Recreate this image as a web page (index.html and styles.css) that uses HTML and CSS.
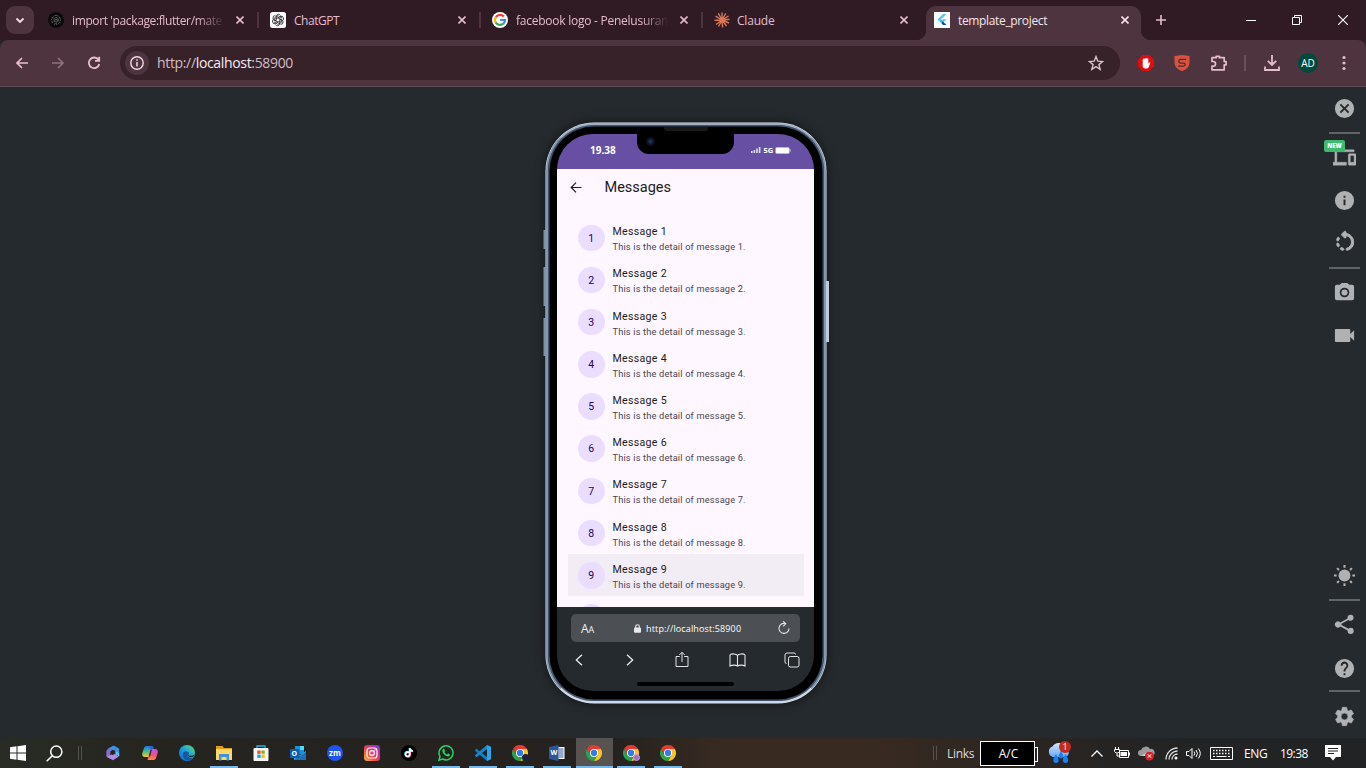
FILE: index.html
```html
<!DOCTYPE html>
<html lang="id">
<head>
<meta charset="utf-8">
<title>template_project</title>
<link rel="stylesheet" href="styles.css">
</head>
<body>
<svg class="defs" width="0" height="0">
  <defs>
    <symbol id="x" viewBox="0 0 8 8"><path d="M.5.5l7 7M7.500.5l-7 7" stroke="currentColor" stroke-width="1.6" fill="none"/></symbol>
    <symbol id="chrome" viewBox="0 0 24 24">
      <path fill="#e33b2e" d="M22.400 6A12 12 0 0 0 1.600 6L6.800 15 12 12V6z"/>
      <path fill="#fcc31e" d="M22.400 6A12 12 0 0 1 12 24l5.200-9L12 12V6z"/>
      <path fill="#2da14c" d="M12 24A12 12 0 0 1 1.600 6l5.200 9L12 12l5.200 3z"/>
      <circle cx="12" cy="12" r="6" fill="#fff"/><circle cx="12" cy="12" r="4.700" fill="#2f7de9"/>
    </symbol>
    <linearGradient id="g-edge" x1="0" y1="1" x2="1" y2="0"><stop offset="0" stop-color="#1265c0"/><stop offset=".5" stop-color="#1e9ee0"/><stop offset="1" stop-color="#5ee06a"/></linearGradient>
    <linearGradient id="g-insta" x1="0" y1="1" x2="1" y2="0"><stop offset="0" stop-color="#fdc04f"/><stop offset=".35" stop-color="#f5523d"/><stop offset=".65" stop-color="#d32c92"/><stop offset="1" stop-color="#7638d8"/></linearGradient>
    <linearGradient id="g-cop1" x1="0" y1="0" x2="0" y2="1"><stop offset="0" stop-color="#1a75e8"/><stop offset=".5" stop-color="#3fbf8a"/><stop offset="1" stop-color="#f5cf22"/></linearGradient>
    <linearGradient id="g-cop2" x1="0" y1="0" x2="0" y2="1"><stop offset="0" stop-color="#b65be8"/><stop offset=".5" stop-color="#ec4f88"/><stop offset="1" stop-color="#fb8b3c"/></linearGradient>
    <linearGradient id="g-cloud" x1="0" y1="0" x2="0" y2="1"><stop offset="0" stop-color="#d4e6fc"/><stop offset="1" stop-color="#6aa6f2"/></linearGradient>
  </defs>
</svg>

<div class="desktop">
  <header class="tabstrip">
    <button class="tab-search"><svg width="10" height="7" viewBox="0 0 10 7"><path d="M1.500 1.500L5 5l3.500-3.500" fill="none" stroke="#f5dfe6" stroke-width="1.800"/></svg></button>
    <div class="tab">
      <svg class="fav" viewBox="0 0 16 16"><circle cx="8" cy="8" r="8" fill="#0b0a0b"/><g fill="none" stroke="#777" stroke-width=".9" stroke-dasharray="1 1"><circle cx="8" cy="8" r="4.500"/><circle cx="8" cy="8" r="2.300"/><path d="M8 3v10M4 5.500l8 5M12 5.500l-8 5"/></g></svg>
      <span class="tab-title t1 fade">import 'package:flutter/mate</span><svg class="tab-x"><use href="#x"/></svg>
    </div>
    <div class="tab">
      <svg class="fav" viewBox="0 0 16 16"><rect width="16" height="16" rx="2.500" fill="#fff"/><g fill="none" stroke="#333" stroke-width=".9"><g id="petal"><path d="M6 7V4.800C6 2 9.500 1.500 10.500 3.500M6 7l3.800-2.200 2.300 1.300"/></g><use href="#petal" transform="rotate(60 8 8)"/><use href="#petal" transform="rotate(120 8 8)"/><use href="#petal" transform="rotate(180 8 8)"/><use href="#petal" transform="rotate(240 8 8)"/><use href="#petal" transform="rotate(300 8 8)"/></g></svg>
      <span class="tab-title t2">ChatGPT</span><svg class="tab-x"><use href="#x"/></svg>
    </div>
    <div class="tab">
      <svg class="fav" viewBox="0 0 16 16"><circle cx="8" cy="8" r="8" fill="#fff"/><g fill="none" stroke-width="2.200"><path d="M11.800 4.500A5 5 0 0 0 3.800 5.300" stroke="#ea4335"/><path d="M3.800 5.200a5 5 0 0 0 0 5.500" stroke="#fbbc04"/><path d="M3.700 10.500a5 5 0 0 0 7.800 1" stroke="#34a853"/><path d="M11.400 11.600A4.700 4.700 0 0 0 13 8H8.200" stroke="#4285f4"/></g></svg>
      <span class="tab-title t3 fade">facebook logo - Penelusuran</span><svg class="tab-x"><use href="#x"/></svg>
    </div>
    <div class="tab last">
      <svg class="fav" viewBox="0 0 16 16"><path d="M8 8V.6M8 8l3.800-6.600M8 8l6.500-4M8 8l7.500-.7M8 8l7 3M8 8l4.500 6M8 8l.6 7.500M8 8l-3.500 6.500M8 8l-6 4.500M8 8L.5 8.300M8 8L1.500 4.200M8 8L4.300 1.300" stroke="#d97757" stroke-width="1.400"/></svg>
      <span class="tab-title t4">Claude</span><svg class="tab-x"><use href="#x"/></svg>
    </div>
    <div class="tab active">
      <svg class="fav" viewBox="0 0 16 16"><path fill="#fff" d="M0 0h16v16H0z"/><path fill="#54c5f8" d="M9 2h3.500L5.200 9.200 3.500 7.500zM9 7.300h3.500L8.800 11 7.100 9.200z"/><path fill="#01579b" d="M7.100 11l1.700-1.700L12.500 13H9z"/><path fill="#29b6f6" d="M5.400 9.300l1.700-1.700 1.700 1.700L7.100 11z"/></svg>
      <span class="tab-title t5">template_project</span><svg class="tab-x"><use href="#x"/></svg>
    </div>
    <button class="new-tab"><svg width="12" height="12" viewBox="0 0 12 12"><path d="M6 1v10M1 6h10" stroke="#e5bccb" stroke-width="1.600"/></svg></button>
    <div class="window-buttons">
      <span><svg width="10" height="10"><path d="M0 5.500h10" stroke="#fff"/></svg></span>
      <span><svg width="10" height="10"><path d="M.5 2.500h7v7h-7zM2.500 2V.5h7v7H8" fill="none" stroke="#fff"/></svg></span>
      <span><svg width="10" height="10"><path d="M0 0l10 10M10 0L0 10" stroke="#fff" stroke-width="1.100"/></svg></span>
    </div>
  </header>

  <nav class="toolbar">
    <div class="nav-buttons">
      <svg width="14" height="12" viewBox="0 0 14 12"><path d="M13 6H2M7 1L2 6l5 5" fill="none" stroke="#ebbfd0" stroke-width="1.700"/></svg>
      <svg width="14" height="12" viewBox="0 0 14 12"><path d="M1 6h11M7 1l5 5-5 5" fill="none" stroke="#8e717d" stroke-width="1.700"/></svg>
      <svg width="14" height="14" viewBox="0 0 14 14"><path d="M11.500 3.800A5.300 5.300 0 1 0 12.300 8M12.200.8v4H8" fill="none" stroke="#ebbfd0" stroke-width="1.800"/></svg>
    </div>
    <div class="omnibox">
      <span class="site-info"><svg width="14" height="14" viewBox="0 0 14 14"><circle cx="7" cy="7" r="6.200" fill="none" stroke="#f0dbe2" stroke-width="1.400"/><path d="M7 6v4.500M7 3.300v1.500" stroke="#f0dbe2" stroke-width="1.500"/></svg></span>
      <span class="url"><span>http://</span><b>localhost</b><span>:58900</span></span>
      <svg class="star" width="16" height="16" viewBox="0 0 16 16"><path d="M8 1.600l1.800 4.600 4.900.3-3.800 3.100 1.300 4.800L8 11.700l-4.200 2.700 1.300-4.800L1.300 6.500l4.900-.3z" fill="none" stroke="#d8c4cc" stroke-width="1.400"/></svg>
    </div>
    <div class="extensions">
      <svg width="16" height="16" viewBox="0 0 16 16"><path fill="#e40c0c" d="M4.700 0h6.600L16 4.700v6.600L11.300 16H4.700L0 11.300V4.700z"/><path fill="#fff" d="M5 4.200c0-.8 1.100-.8 1.200 0 0-1.200 1.400-1.200 1.400-.4.100-1.200 1.400-1.100 1.400 0 .2-.8 1.300-.7 1.300.2v4.500l.9-1.100c.6-.5 1.300 0 1 .7L10.800 12c-.4.900-1.200 1.500-2.300 1.500H7.200c-1.400 0-2.500-1-2.500-2.500V5c0-.4.100-.7.300-.8z"/></svg>
      <svg width="16" height="16" viewBox="0 0 16 16"><path fill="#d9523f" d="M.5 1L8 0l7.500 1v6c0 5-3 7.500-7.500 9C3.500 14.500.5 12 .5 7z"/><path d="M12 4.400H6.300a1.900 1.900 0 0 0 0 3.700h3.300a1.500 1.500 0 0 1 0 3H4" stroke="#4e2c34" stroke-width="1.300" fill="none"/></svg>
      <svg width="18" height="18" viewBox="0 0 18 18"><path d="M2 3.700h4.200V2.300h3.200v1.400h4.800v3.900h1.900v3.200h-1.900v5H2v-3.600h1.200a2.200 2.200 0 0 0 0-4.700H2z" fill="none" stroke="#e5bccb" stroke-width="1.700" stroke-linejoin="round"/></svg>
    </div>
    <i class="bar-divider"></i>
    <svg class="download" width="16" height="16" viewBox="0 0 16 16"><path d="M8 0v9.500M3.800 5.800L8 10l4.200-4.200M1 11.500V15h14v-3.500" fill="none" stroke="#e5bccb" stroke-width="1.800"/></svg>
    <span class="avatar">AD</span>
    <svg class="kebab" width="4" height="16" viewBox="0 0 4 16"><g fill="#e5bccb"><circle cx="2" cy="2.500" r="1.600"/><circle cx="2" cy="8" r="1.600"/><circle cx="2" cy="13.500" r="1.600"/></g></svg>
  </nav>

  <main class="stage">
    <div class="phone">
      <i class="key mute"></i><i class="key vol-up"></i><i class="key vol-down"></i><i class="key power"></i>
      <i class="speaker"></i>
      <div class="screen">
        <div class="status">
          <span class="clock">19.38</span>
          <span class="signal"><svg width="10" height="6" viewBox="0 0 10 6"><path fill="#e3dcf1" d="M0 4h1.600v2H0zM2.600 3h1.600v3H2.600zM5.200 1.500h1.600V6H5.200zM7.800 0h1.600v6H7.800z"/></svg>5G<svg width="16" height="7" viewBox="0 0 16 7"><rect x=".5" y=".3" width="14" height="6.400" rx="1.700" fill="#fff" stroke="#a99bcc" stroke-width=".7"/><path d="M15.500 2.500v2" stroke="#b9addb"/></svg></span>
          <i class="notch"><i class="camera"></i></i>
        </div>
        <div class="app">
          <div class="appbar"><svg width="12" height="11" viewBox="0 0 12 11"><path d="M11.500 5.500h-10M6 .7L1.200 5.500 6 10.300" fill="none" stroke="#1d1b20" stroke-width="1.200"/></svg><span>Messages</span></div>
          <div class="list">
            <div class="row"><i class="num">1</i><div><p>Message 1</p><small>This is the detail of message 1.</small></div></div>
            <div class="row"><i class="num">2</i><div><p>Message 2</p><small>This is the detail of message 2.</small></div></div>
            <div class="row"><i class="num">3</i><div><p>Message 3</p><small>This is the detail of message 3.</small></div></div>
            <div class="row"><i class="num">4</i><div><p>Message 4</p><small>This is the detail of message 4.</small></div></div>
            <div class="row"><i class="num">5</i><div><p>Message 5</p><small>This is the detail of message 5.</small></div></div>
            <div class="row"><i class="num">6</i><div><p>Message 6</p><small>This is the detail of message 6.</small></div></div>
            <div class="row"><i class="num">7</i><div><p>Message 7</p><small>This is the detail of message 7.</small></div></div>
            <div class="row"><i class="num">8</i><div><p>Message 8</p><small>This is the detail of message 8.</small></div></div>
            <div class="row hover"><i class="num">9</i><div><p>Message 9</p><small>This is the detail of message 9.</small></div></div>
            <div class="row"><i class="num"></i></div>
          </div>
        </div>
        <div class="safari">
          <div class="address">
            <span class="aa">A<small>A</small></span>
            <span class="addr"><svg width="7" height="9" viewBox="0 0 7 9"><rect y="3.600" width="7" height="5.200" rx="1" fill="#e8e8e8"/><path d="M1.700 4V2.500a1.800 1.800 0 0 1 3.600 0V4" fill="none" stroke="#e8e8e8" stroke-width="1.100"/></svg><span class="addr-text">http://localhost:58900</span></span>
            <svg width="12" height="14" viewBox="0 0 12 14"><path d="M7 2.500A5 5 0 1 0 11 7.500M5 .3l2.700 2.300L5.300 5.300" fill="none" stroke="#e4e4e4" stroke-width="1.100"/></svg>
          </div>
          <div class="actions">
            <svg width="8" height="12" viewBox="0 0 8 12"><path d="M7 .8L1.300 6 7 11.200" fill="none" stroke="#f1f1f1" stroke-width="1.200"/></svg>
            <svg class="a2" width="8" height="12" viewBox="0 0 8 12"><path d="M1 .8L6.700 6 1 11.200" fill="none" stroke="#f1f1f1" stroke-width="1.200"/></svg>
            <svg class="a3" width="14" height="17" viewBox="0 0 14 17"><path d="M4.800 5.500H1v10h12v-10H9.200M7 11V1.300M4.300 4L7 1.300 9.700 4" fill="none" stroke="#e4e4e4" stroke-linejoin="round"/></svg>
            <svg class="a4" width="17" height="14" viewBox="0 0 17 14"><path d="M8.500 2.500C7.500.7 2.500.3 1 2v11c2-1.200 6-1.200 7.500 0 1.500-1.200 5.500-1.200 7.500 0V2C14.500.3 9.500.7 8.500 2.500zV13" fill="none" stroke="#e4e4e4" stroke-width="1.100"/></svg>
            <svg class="a5" width="16" height="16" viewBox="0 0 16 16"><rect x="4.500" y="4.500" width="10.500" height="10.500" rx="1.800" fill="none" stroke="#e4e4e4"/><path d="M2.500 11.500A1.500 1.500 0 0 1 1 10V3a2 2 0 0 1 2-2h7a1.500 1.500 0 0 1 1.500 1.500" fill="none" stroke="#e4e4e4"/></svg>
          </div>
          <i class="home"></i>
        </div>
      </div>
    </div>

    <aside class="rail">
      <span class="h44"><svg viewBox="0 0 24 24"><path d="M12 2a10 10 0 1 0 0 20 10 10 0 0 0 0-20zm5 13.600L15.600 17 12 13.400 8.400 17 7 15.600l3.600-3.600L7 8.400 8.400 7l3.600 3.600L15.600 7 17 8.400 13.400 12z"/></svg></span>
      <hr>
      <span class="h45 devices"><svg viewBox="0 0 24 24"><path d="M4 6h18V4H4c-1.100 0-2 .9-2 2v11H0v3h14v-3H4zm19 2h-6c-.5 0-1 .5-1 1v10c0 .6.500 1 1 1h6c.5 0 1-.4 1-1V9c0-.5-.5-1-1-1zm-1 9h-4v-7h4z" stroke="#afb1b2" stroke-width=".5"/></svg><b class="new">NEW</b></span>
      <span class="h42"><svg viewBox="0 0 24 24"><path d="M12 2a10 10 0 1 0 0 20 10 10 0 0 0 0-20zm1 15h-2v-6h2zm0-8h-2V7h2z"/></svg></span>
      <span class="h42 rotate"><svg viewBox="0 0 24 24"><path d="M6.560 7.980C6.100 7.520 5.310 7.600 5 8.170c-.28.510-.5 1.030-.67 1.580-.19.630.310 1.250.960 1.250h.010c.43 0 .82-.28.940-.7.120-.4.280-.79.480-1.170.22-.37.150-.84-.16-1.150zM5.310 13h-.02c-.65 0-1.150.62-.96 1.250.16.540.380 1.070.660 1.580.31.570 1.110.660 1.570.2.300-.31.380-.77.170-1.150-.2-.37-.36-.76-.48-1.160-.12-.44-.51-.72-.94-.72zm2.850 6.020c.52.280 1.050.510 1.590.660.620.180 1.240-.32 1.240-.96v-.03c0-.43-.28-.82-.7-.94-.4-.12-.78-.28-1.150-.48-.38-.21-.86-.14-1.160.170l-.03.030c-.45.450-.36 1.240.210 1.550zM13 4.070V3.050c0-.89-1.080-1.340-1.710-.71L9.170 4.460c-.39.390-.39 1.020 0 1.410l2.120 2.120c.63.630 1.710.190 1.710-.7V6.090c2.840.48 5 2.940 5 5.910 0 2.730-1.820 5.020-4.320 5.750-.41.120-.68.510-.68.940v.02c0 .65.610 1.140 1.230.96A7.976 7.976 0 0 0 20 12c0-4.080-3.050-7.440-7-7.930z" stroke="#afb1b2" stroke-width=".9"/></svg></span>
      <hr class="second">
      <span class="h46"><svg viewBox="0 0 24 24"><circle cx="12" cy="12" r="3.200"/><path d="M9 2L7.170 4H4a2 2 0 0 0-2 2v12a2 2 0 0 0 2 2h16a2 2 0 0 0 2-2V6a2 2 0 0 0-2-2h-3.170L15 2zm3 15a5 5 0 1 1 0-10 5 5 0 0 1 0 10z"/></svg></span>
      <span class="h40"><svg viewBox="0 0 24 24"><path d="M18 10.500V6.300a1 1 0 0 0-1-1H3a1 1 0 0 0-1 1v11.400a1 1 0 0 0 1 1h14a1 1 0 0 0 1-1v-4.200l4 4v-11z"/></svg></span>
      <span class="h46 sun"><svg viewBox="0 0 24 24"><circle cx="12" cy="12" r="6.200"/><path d="M12 1v2.800M12 20.200V23M1 12h2.800M20.200 12H23M4.300 4.300l1.900 1.900M17.800 17.800l1.900 1.900M4.300 19.700l1.900-1.900M17.800 6.200l1.900-1.900" stroke="#afb1b2" stroke-width="2.200"/></svg></span>
      <hr class="flush">
      <span class="h46"><svg viewBox="0 0 24 24"><path d="M18.500 15.500c-.9 0-1.700.4-2.300 1L8.900 12.600v-1.300l7.200-4a3.200 3.200 0 1 0-1-2.300v.8L7.600 9.900a3.200 3.200 0 1 0 0 4.300l7.600 4v.7a3.200 3.200 0 1 0 3.300-3.400z"/></svg></span>
      <span class="h42"><svg viewBox="0 0 24 24"><path d="M12 2a10 10 0 1 0 0 20 10 10 0 0 0 0-20zm1 17h-2v-2h2zm2.070-7.750l-.9.920C13.450 12.900 13 13.500 13 15h-2v-.5c0-1.100.45-2.100 1.170-2.830l1.240-1.260A2 2 0 1 0 10 9H8a4 4 0 1 1 7.070 2.250z"/></svg></span>
      <hr>
      <span class="h46 gear"><svg viewBox="0 0 24 24"><path d="M19.140 12.940c.04-.3.060-.61.060-.94s-.02-.64-.07-.94l2.030-1.580a.49.49 0 0 0 .12-.61l-1.920-3.320a.49.49 0 0 0-.59-.22l-2.390.960a7 7 0 0 0-1.620-.94l-.36-2.540a.48.48 0 0 0-.48-.41h-3.840a.47.47 0 0 0-.47.410l-.36 2.540c-.59.240-1.130.570-1.620.940l-2.390-.96a.48.48 0 0 0-.59.220L2.740 8.870a.47.47 0 0 0 .12.610l2.030 1.580a6 6 0 0 0 0 1.880l-2.030 1.580a.49.49 0 0 0-.12.610l1.920 3.320c.12.220.370.290.590.220l2.390-.96c.5.380 1.030.700 1.620.940l.36 2.540c.05.240.240.410.480.410h3.840c.24 0 .44-.17.470-.41l.36-2.540c.59-.24 1.130-.56 1.620-.94l2.390.960c.22.080.470 0 .59-.22l1.920-3.320a.47.47 0 0 0-.12-.61zM12 15.600a3.600 3.600 0 1 1 0-7.200 3.600 3.600 0 0 1 0 7.200z" stroke="#afb1b2" stroke-width=".7"/></svg></span>
    </aside>
  </main>

  <footer class="taskbar">
    <span class="start"><svg width="16" height="16" viewBox="0 0 16 16"><path fill="#fff" d="M0 2.200l6.500-.9v6.200H0zM7.500 1.200L16 0v7.500H7.500zM0 8.500h6.500v6.200L0 13.800zM7.500 8.500H16V16l-8.500-1.200z"/></svg></span>
    <span class="search"><svg width="17" height="17" viewBox="0 0 17 17"><circle cx="10.300" cy="6.700" r="5.600" fill="none" stroke="#fff" stroke-width="1.500"/><path d="M6.300 10.700L.7 16.300" stroke="#fff" stroke-width="1.600"/></svg></span>
    <i class="grip"></i>
    <div class="apps">
      <span><svg viewBox="0 0 16 16"><path fill="#8d6cc4" d="M8.500.8L3.500 3.300 1.300 6v5.500l3.400 2L5.500 6l4-2z"/><path fill="#3f8fe0" d="M7.500 1l2-.2 4.700 3v7l-3.700-2.300V6L7 4.200 5.300 6 3 4.500z"/><path fill="#5bc4ee" d="M10.500 6l3.700 2.200v3.300l-3.700-2.300z"/><path fill="#b68aea" d="M2 12l6-3.400 2.500.6 3.300 2.300L8 15.200z"/><path fill="#24231f" d="M6.200 6.300l3.300.2.300 2.600-3 1.200z"/></svg></span>
      <span><svg viewBox="0 0 16 16"><path fill="url(#g-cop1)" d="M5 1h5.500L7.500 12H3C0 12-.2 9.500.6 7L2 3C2.500 1.500 3.500 1 5 1z"/><path fill="url(#g-cop2)" d="M11 15H5.500L8.500 4H13c3 0 3.200 2.500 2.400 5L14 13c-.5 1.500-1.500 2-3 2z"/><path fill="#315fd6" d="M8 1h2c1.300 0 1.500 1.500 2 3H8z"/><path d="M9.300 4.500l-2 7" stroke="#3a2030" stroke-width="1.200"/></svg></span>
      <span><svg viewBox="0 0 16 16"><circle cx="8" cy="8" r="8" fill="url(#g-edge)"/><path fill="#1456ac" d="M4 8c1-2 3.500-2.500 5-1-1.500 1-1.500 5.500 3 6 1 0 2-.4 2.800-.8C12.500 16 5.500 17.500 4 11z"/><path fill="#262420" d="M9 7c1.500 1-.3 2 .3 2.900 1 1.400 4.500 1.100 6.200-.7l-.7 2.300C11 13 7 11 9 7z"/></svg></span>
      <span class="running"><svg viewBox="0 0 16 16"><path fill="#dc9c18" d="M0 1h6.500L8 3h8v4H0z"/><path fill="#ffd768" d="M0 4h16v11H0z"/><path fill="#3c93dc" d="M3 9h10v6.500h-2.500V12h-5v3.500H3z"/></svg></span>
      <span><svg viewBox="0 0 16 16"><path d="M4 4V1h8v3" fill="none" stroke="#20b2e5" stroke-width="1.300"/><rect x=".5" y="3" width="15" height="13" rx="1" fill="#f5f5f5"/><path fill="#f25022" d="M4.300 5.500h3.300v3.300H4.300z"/><path fill="#7fba00" d="M8.400 5.500h3.300v3.300H8.400z"/><path fill="#00a4ef" d="M4.300 9.600h3.300v3.300H4.300z"/><path fill="#ffb900" d="M8.400 9.600h3.300v3.300H8.400z"/></svg></span>
      <span class="outlook"><svg viewBox="0 0 16 16"><path fill="#1490df" d="M5 1h9v8H5z"/><path fill="#28a8ea" d="M4 6l6 4 6-4v9H4z"/><path fill="#50d9ff" d="M10 1h4v4h-4z"/><path fill="#1b70bd" d="M4 15l12-8v8z"/><rect y="4" width="9.500" height="9" rx=".8" fill="#0a5fb2"/></svg><em>O</em></span>
      <span class="zoom"><em>zm</em></span>
      <span><svg viewBox="0 0 16 16"><rect width="16" height="16" rx="3.500" fill="url(#g-insta)"/><rect x="3" y="3" width="10" height="10" rx="2.800" fill="none" stroke="#fff" stroke-width="1.200"/><circle cx="8" cy="8" r="2.400" fill="none" stroke="#fff" stroke-width="1.200"/><circle cx="11" cy="5" r=".7" fill="#fff"/></svg></span>
      <span><svg viewBox="0 0 16 16"><circle cx="8" cy="8" r="8" fill="#000"/><g fill="none" stroke-width="1.600"><path stroke="#25f4ee" d="M7.400 7a2.200 2.200 0 1 0 1 2V3c.3 1.500 1.300 2.500 3 2.500"/><path stroke="#fe2c55" d="M8.400 8a2.200 2.200 0 1 0 1 2V4c.3 1.500 1.300 2.500 3 2.500"/><path stroke="#fff" d="M7.900 7.500a2.200 2.200 0 1 0 1 2v-6c.3 1.500 1.300 2.500 3 2.500"/></g></svg></span>
      <span class="running"><svg viewBox="0 0 16 16"><path d="M.9 15.200l1.100-3.800a7 7 0 1 1 2.700 2.600z" fill="none" stroke="#25d366" stroke-width="1.500"/><path fill="#25d366" d="M5 4.200c.5-.5 1.200-.4 1.400.1l.6 1.500c.1.500-.7.900-.6 1.200.5 1 1.400 1.900 2.600 2.400.4.100.8-1 1.200-.9l1.500.8c.5.300.2 1.600-.6 2-2.500 1-7-2.800-6.800-5.600 0-.6.300-1.100.7-1.500z"/></svg></span>
      <span class="running"><svg viewBox="0 0 16 16"><path fill="#0d7fc9" d="M0 5l1.500-1.200L12 12v4L0 5.800z"/><path fill="#1489d2" d="M0 11l1.500 1.200L12 4V0L0 10.300z"/><path fill="#2aa6ee" d="M12 0l4 1.800v12.400L12 16z"/></svg></span>
      <span class="running"><svg><use href="#chrome"/></svg><i class="badge dark"></i></span>
      <span class="running word"><svg viewBox="0 0 16 16"><path fill="#fff" d="M8 2h7.500v12H8z"/><path d="M9.500 4h5M9.500 6h5M9.500 8h5M9.500 10h5M9.500 12h5" stroke="#2b579a"/><path fill="#2b579a" d="M0 2l9.500-2v16L0 14z"/></svg><em>W</em></span>
      <span class="running current"><svg><use href="#chrome"/></svg></span>
      <span class="running"><svg><use href="#chrome"/></svg><i class="badge purple"></i></span>
      <span class="running"><svg><use href="#chrome"/></svg></span>
    </div>
    <div class="tray">
      <i class="grip"></i>
      <span class="links">Links</span>
      <span class="battery">A/C</span>
      <span class="weather"><svg width="25" height="23" viewBox="0 0 25 23"><path fill="url(#g-cloud)" d="M6 15a5.500 5.500 0 0 1-.5-10.500A7 7 0 0 1 18 5a5.500 5.500 0 0 1 1 10z"/><path fill="#1683f4" d="M9 12c-1.800 3-2.700 4.500-2.700 6.200a2.700 2.700 0 0 0 5.400 0C11.700 16.500 10.500 15 9 12zM18.500 12c-1.800 3-2.700 4.500-2.700 6.200a2.700 2.700 0 0 0 5.400 0c0-1.700-1.200-3.200-2.700-6.200zM14 9c-1.500 2.500-2.200 3.500-2.200 5.200a2.200 2.200 0 0 0 4.400 0C16.200 12.500 15.500 11.500 14 9z"/></svg><b>1</b></span>
      <svg class="chev" width="12" height="7" viewBox="0 0 12 7"><path d="M.5 6.500L6 1l5.500 5.500" fill="none" stroke="#fff" stroke-width="1.300"/></svg>
      <svg class="power-icon" width="16" height="13" viewBox="0 0 16 13"><path d="M5.500 3.500h9v7h-9zM15.500 5.500v3M1.500 0v2.500M4.500 0v2.500M.5 2.500h5v2L4 6H2L.5 4.500zM3 6.500V9h2" fill="none" stroke="#fff"/><path fill="#fff" d="M6.500 5h6.500v4H6.500z"/></svg>
      <svg class="onedrive" width="17" height="15" viewBox="0 0 17 15"><path fill="#9a9a9a" d="M3 10a3 3 0 0 1 0-6A5 5 0 0 1 12 3a3.500 3.500 0 0 1 2 7z"/><path fill="#d0d0d0" d="M3 10l8-5c2-1 4 1 3.500 5z"/><circle cx="11.500" cy="10" r="4.500" fill="#d42027"/><path d="M9.800 8.300l3.400 3.400M13.200 8.300l-3.400 3.400" stroke="#fff"/></svg>
      <svg class="wifi" width="13" height="13" viewBox="0 0 13 13"><path d="M1 12.500A11.500 11.500 0 0 1 12.500 1M4 12.500A8.500 8.500 0 0 1 12.500 4M7 12.500A5.500 5.500 0 0 1 12.500 7" fill="none" stroke="#ddd" stroke-width="1.300"/><circle cx="11" cy="11" r="1.500" fill="#fff"/></svg>
      <svg class="volume" width="16" height="13" viewBox="0 0 16 13"><path d="M.5 4.500H3L6 1.500v10L3 8.500H.5zM8 4.500q1.500 2 0 4M10 3q3 3.500 0 7M12.300 1.500q4 5 0 10" fill="none" stroke="#fff"/></svg>
      <svg class="keyboard" width="23" height="13" viewBox="0 0 23 13"><path d="M.5.500h22v12H.5z" fill="none" stroke="#fff"/><path d="M3 3.500h17M3 6.500h17" stroke="#fff" stroke-width="1.300" stroke-dasharray="1.500 1.500"/><path d="M3 9.500h2M6.500 9.500h10M18 9.500h2" stroke="#fff"/></svg>
      <span class="lang">ENG</span>
      <span class="time">19:38</span>
      <svg class="notif" width="16" height="16" viewBox="0 0 16 16"><path fill="#fff" d="M0 0h16v12h-5l-3 3.500L5 12H0z"/><path d="M3 3.500h10M3 6h10M3 8.500h6" stroke="#26231f"/></svg>
    </div>
  </footer>
</div>
</body>
</html>
```
FILE: styles.css
```css
* { box-sizing: border-box; }
body { margin: 0; width: 1366px; height: 768px; overflow: hidden; font-family: "Open Sans", "Noto Sans", sans-serif; }
button { border: 0; padding: 0; background: none; }
svg { display: block; flex: none; }
i, em { font-style: normal; }
.defs { position: absolute; }
.desktop { height: 768px; display: grid; grid-template-rows: 40px 47px 651px 30px; background: #25292d; }

.tabstrip { display: flex; background: #301b24; padding-left: 6px; }
.tab-search { width: 28px; height: 28px; margin: 6px 4px 0 0; border-radius: 9px; background: #4e343f; display: grid; place-items: center; }
.tab { width: 222px; height: 40px; display: flex; align-items: center; padding: 0 16px 0 10px; position: relative; color: #e5bccb; }
.tab::after { content: ""; position: absolute; right: 1px; top: 12px; width: 2px; height: 16px; background: #4e343f; }
.tab.last { padding-right: 18px; }
.tab.last::after, .tab.active::after { display: none; }
.fav { width: 16px; height: 16px; margin-right: 8px; flex: none; }
.last .fav { margin-right: 7px; }
.tab-title { width: 156px; font-size: 12px; line-height: 18px; white-space: nowrap; margin-top: 1px; }
.fade { -webkit-mask-image: linear-gradient(90deg, #000 80%, transparent 98%); mask-image: linear-gradient(90deg, #000 80%, transparent 98%); }
.tab-x { width: 8px; height: 8px; margin-left: auto; }
.tab.active { width: 215px; height: 34px; margin-top: 6px; padding: 0 12px 6px 8px; background: #4e343f; border-radius: 10px 10px 0 0; color: #f7e4ea; }
.tab.active::before { content: ""; position: absolute; left: -10px; right: -10px; bottom: 0; height: 10px; background: radial-gradient(circle at 0 0, transparent 10px, #4e343f 10.5px) left / 10px 10px no-repeat, radial-gradient(circle at 100% 0, transparent 10px, #4e343f 10.5px) right / 10px 10px no-repeat; }
.new-tab { width: 40px; height: 40px; display: grid; place-items: center; }
.window-buttons { margin-left: auto; display: flex; }
.window-buttons span { width: 46px; height: 40px; display: grid; place-items: center; }
.t1 { letter-spacing: -.38px; } .t2 { letter-spacing: -.45px; } .t3 { letter-spacing: -.25px; } .t4 { letter-spacing: -.2px; } .t5 { letter-spacing: -.35px; }

.toolbar { display: flex; align-items: center; background: #4e343f; border-bottom: 1px solid #5e4c50; border-radius: 8px 8px 0 0; box-shadow: 0 -8px 0 -1px #301b24; }
.tabstrip, .tab { z-index: 1; }
.nav-buttons { display: flex; gap: 22px; padding-left: 15px; width: 120px; align-items: center; }
.omnibox { width: 1000px; height: 34px; border-radius: 17px; background: #37222a; display: flex; align-items: center; padding: 0 16px 0 5px; }
.site-info { width: 24px; height: 24px; border-radius: 50%; background: #4e343f; display: grid; place-items: center; }
.url { margin-left: 8px; font-size: 14px; line-height: 20px; color: #d3bbc4; letter-spacing: -.34px; }
.url b { font-weight: 400; color: #fbeaf0; }
.star { margin-left: auto; }
.extensions { display: flex; align-items: center; gap: 20px; margin-left: 18px; }
.bar-divider { width: 2px; height: 16px; background: #69505b; margin-left: 16px; }
.download { margin-left: 18px; }
.avatar { width: 20px; height: 20px; border-radius: 50%; background: #00493d; color: #fff; font-size: 10px; line-height: 20px; text-align: center; margin-left: 18px; }
.kebab { margin-left: 24px; }

.stage { display: grid; grid-template-columns: 546px 280px 496px 44px; background: #252a2e; border-top: 1px solid #20292d; }
.phone { grid-column: 2; position: relative; height: 580px; margin-top: 35px; border-radius: 48px; background: #000; border: 2px solid #8397b0; border-top-color: #a0afc2; border-bottom-color: #cdd7e5; box-shadow: inset 0 0 0 1.500px #40536d, 0 0 0 .5px #dce5ef, 0 0 9px 3px rgba(0,0,0,.35); padding: 9px; }
.key { position: absolute; width: 3px; background: #8292a6; border-left: 1px solid #4c5d73; left: -5px; }
.mute { top: 105px; height: 19px; }
.vol-up { top: 142px; height: 39px; }
.vol-down { top: 193px; height: 38px; }
.power { left: 278px; top: 156px; height: 61px; background: #c0cbd9; border: 0; }
.speaker { position: absolute; top: 2px; left: 116px; width: 44px; height: 4px; border-radius: 0 0 3px 3px; background: #191919; }
.screen { width: 257px; height: 557px; border-radius: 36px; overflow: hidden; background: #252a2e; }
.status { height: 35px; position: relative; display: flex; justify-content: space-between; align-items: center; padding: 0 23px 3px 33px; background: #6750a4; color: #fff; }
.clock { font-size: 10px; font-weight: 700; }
.signal { display: flex; align-items: center; gap: 2px; font-size: 7.500px; font-weight: 700; letter-spacing: -.1px; }
.notch { position: absolute; left: 80px; top: 0; width: 97px; height: 20px; background: #000; border-radius: 0 0 12px 12px; }
.camera { position: absolute; left: 9px; top: 3px; width: 9px; height: 9px; border-radius: 50%; background: radial-gradient(circle, #163067 15%, #101522 45%, #0c0d10 70%); }
.app { height: 438px; overflow: hidden; background: #fef7ff; font-family: Roboto, sans-serif; }
.appbar { height: 37px; display: flex; align-items: center; gap: 23px; padding-left: 12.500px; font-size: 14.500px; color: #1d1b20; }
.list { padding: 10.700px 10px 0 11px; }
.row { height: 42.200px; display: flex; align-items: center; gap: 8px; padding-left: 10px; }
.row.hover { background: #f2ecf4; }
.num { width: 26.500px; height: 26.500px; border-radius: 50%; background: #eaddff; color: #21005d; font-size: 10.500px; line-height: 27px; text-align: center; }
.row > div { padding-top: 3px; }
.row p { margin: 0; font-size: 10.600px; line-height: 15px; color: #1d1b20; letter-spacing: .3px; }
.row small { display: block; font-size: 9.240px; line-height: 15px; color: #49454f; letter-spacing: .17px; }
.safari { padding: 7px 14px 0; height: 84px; display: flex; flex-direction: column; }
.address { width: 229px; height: 28px; border-radius: 5px; background: #4c5054; display: flex; align-items: center; justify-content: space-between; padding: 0 10px; }
.aa { color: #f2f2f2; font-size: 12px; } .aa small { font-size: 9px; }
.addr { display: flex; align-items: center; gap: 5px; margin-left: 3px; }
.addr-text { color: #fff; font-size: 9px; letter-spacing: .13px; }
.actions { display: flex; align-items: center; height: 36px; padding-left: 4px; }
.a2 { margin-left: 43px; } .a3 { margin-left: 41px; margin-bottom: 2px; } .a4 { margin-left: 40px; } .a5 { margin-left: 37.500px; }
.home { width: 97px; height: 4px; border-radius: 2px; background: #000; margin: 4px 0 0 66px; }

.rail { grid-column: 4; display: flex; flex-direction: column; align-items: center; margin-top: -1px; }
.rail span { width: 44px; display: grid; place-items: center; flex: none; }
.rail svg { width: 23px; height: 23px; fill: #afb1b2; }
.rail hr { width: 31px; height: 2px; border: 0; margin: 1px 0 0; background: #606467; flex: none; }
.rail .second { margin-top: 4px; }
.rail .flush { margin-top: 0; }
.rail .rotate { padding-left: 2px; }
.rail .rotate svg { width: 26px; height: 26px; }
.h44 { height: 44px; padding-bottom: 1px; } .h46 { height: 46px; } .h45 { height: 45px; } .h42 { height: 42px; } .h40 { height: 40px; }
.devices { position: relative; padding-top: 2px; }
.new { position: absolute; left: 2px; top: 6px; width: 21px; height: 12px; border-radius: 2px; background: #3fb870; color: #fff; font-size: 6px; line-height: 12px; text-align: center; font-weight: 800; }
.rail .sun { margin-top: auto; padding-bottom: 2px; }
.rail .gear { padding-top: 3px; }

.taskbar { display: flex; align-items: center; background: linear-gradient(90deg, #282c25 0, #26241f 12%, #25221f 45%, #382a21 53%, #382a21 64%, #2a2522 75%, #222324 88%, #222324); }
.start { margin-left: 10px; }
.search { margin-left: 20px; }
.grip { width: 4px; height: 14px; border: solid #57524c; border-width: 0 1px; margin-left: 15px; flex: none; }
.apps { display: flex; margin-left: 12.500px; align-self: stretch; }
.apps > span { width: 37px; display: grid; place-items: center; position: relative; }
.apps svg { width: 16px; height: 16px; }
.running::after { content: ""; position: absolute; left: 4.500px; right: 4.500px; bottom: 0; height: 2px; background: #76b9ed; }
.current { background: #575350; }
.current::after { left: 0; right: 0; }
.apps em { position: absolute; color: #fff; font-weight: 700; line-height: 10px; }
.outlook em { left: 12px; top: 10.500px; font-size: 7px; }
.word em { left: 12px; top: 10px; font-size: 7px; }
.apps .zoom em { width: 16px; height: 16px; border-radius: 50%; background: #1d55f0; font-size: 8px; line-height: 15px; text-align: center; }
.badge { position: absolute; left: 20px; top: 16px; width: 7px; height: 7px; border-radius: 50%; }
.dark { background: #19233c; } .purple { background: #a46bd0; border: 1.500px solid #c99ae6; }
.tray { margin-left: auto; width: 446px; display: flex; align-items: center; color: #fff; font-size: 12px; height: 30px; }
.tray .grip { margin-left: 13px; }
.links { margin-left: 10px; width: 33px; letter-spacing: -.3px; color: #ddd; }
.battery { width: 55px; height: 25px; background: #000; border: 1px solid #fff; text-align: center; line-height: 23px; position: relative; padding-left: 2px; }
.battery::after { content: ""; position: absolute; right: -4px; top: 5px; width: 3px; height: 13px; border: 1px solid #fff; border-left: 0; }
.weather { margin-left: 12px; position: relative; }
.weather b { position: absolute; left: 12px; top: -1px; width: 12px; height: 12px; border-radius: 50%; background: #c42b1c; font-size: 9px; line-height: 12px; text-align: center; font-weight: 400; }
.chev { margin-left: 19px; } .power-icon { margin-left: 11px; } .onedrive { margin-left: 8px; } .wifi { margin-left: 10px; } .volume { margin-left: 8px; } .keyboard { margin-left: 8px; }
.lang { margin-left: 11px; width: 24px; letter-spacing: -.4px; }
.time { margin-left: 12px; width: 29px; letter-spacing: -.55px; }
.notif { margin-left: 16px; }
```
